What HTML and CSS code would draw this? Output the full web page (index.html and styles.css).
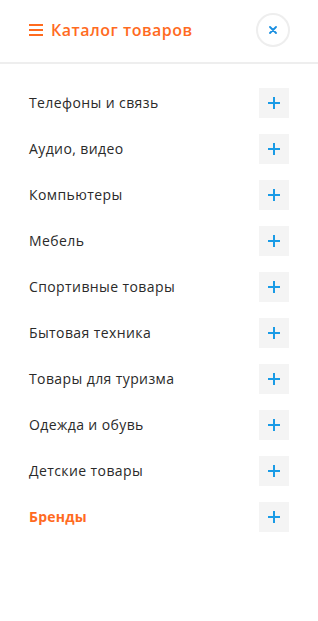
FILE: index.html
```html
<!DOCTYPE html>
<html lang="ru">
<head>
<meta charset="utf-8">
<title>Каталог товаров</title>
<link rel="stylesheet" href="styles.css">
</head>
<body>
<div class="panel">
  <header class="head">
    <div class="title">
      <svg class="burger" width="14" height="12" viewBox="0 0 14 12"><rect x="0" y="0" width="14" height="2" fill="#ff6b1f"/><rect x="0" y="5" width="14" height="2" fill="#ff6b1f"/><rect x="0" y="10" width="14" height="2" fill="#ff6b1f"/></svg>
      <span>Каталог товаров</span>
    </div>
    <button class="close" aria-label="Закрыть">
      <svg width="8" height="8" viewBox="0 0 8 8"><path d="M1 1L7 7M7 1L1 7" stroke="#1a8fe0" stroke-width="1.8" stroke-linecap="round"/></svg>
    </button>
  </header>
  <ul class="list">
    <li class="item"><span>Телефоны и связь</span><span class="plus"></span></li>
    <li class="item"><span>Аудио, видео</span><span class="plus"></span></li>
    <li class="item"><span>Компьютеры</span><span class="plus"></span></li>
    <li class="item"><span>Мебель</span><span class="plus"></span></li>
    <li class="item"><span>Спортивные товары</span><span class="plus"></span></li>
    <li class="item"><span>Бытовая техника</span><span class="plus"></span></li>
    <li class="item"><span>Товары для туризма</span><span class="plus"></span></li>
    <li class="item"><span>Одежда и обувь</span><span class="plus"></span></li>
    <li class="item"><span>Детские товары</span><span class="plus"></span></li>
    <li class="item brand"><span>Бренды</span><span class="plus"></span></li>
  </ul>
</div>
</body>
</html>
```
FILE: styles.css
```css
* { box-sizing: border-box; }
body {
  margin: 0;
  background: #fff;
  font-family: "Open Sans", "Noto Sans", sans-serif;
  color: #2a2a2a;
}
.head {
  height: 64px;
  border-bottom: 2px solid #eeeeee;
  display: flex;
  align-items: center;
  justify-content: space-between;
  padding: 0 29px 2px 29px;
}
.title {
  display: flex;
  align-items: center;
  gap: 8px;
  color: #ff6b1f;
  font-size: 16px;
  font-weight: 600;
  letter-spacing: 0.5px;
}
.burger { display: block; }
.close {
  width: 34px;
  height: 34px;
  border-radius: 50%;
  border: 2px solid #eeeeee;
  background: #fff;
  display: flex;
  align-items: center;
  justify-content: center;
  padding: 0;
  margin-right: -1px;
}
.close svg { display: block; }
.list {
  list-style: none;
  margin: 0;
  padding: 24px 29px 0 29px;
  display: flex;
  flex-direction: column;
  gap: 16px;
}
.item {
  height: 30px;
  display: flex;
  align-items: center;
  justify-content: space-between;
  font-size: 14px;
  letter-spacing: 0.4px;
  line-height: 1;
}
.brand {
  color: #ff6b1f;
  font-weight: 700;
  letter-spacing: 0.2px;
}
.plus {
  width: 30px;
  height: 30px;
  background: #f4f4f4;
  position: relative;
}
.plus::before, .plus::after {
  content: "";
  position: absolute;
  background: #1a9be6;
  left: 50%;
  top: 50%;
  transform: translate(-50%, -50%);
}
.plus::before { width: 12px; height: 2px; }
.plus::after { width: 2px; height: 12px; }
```
